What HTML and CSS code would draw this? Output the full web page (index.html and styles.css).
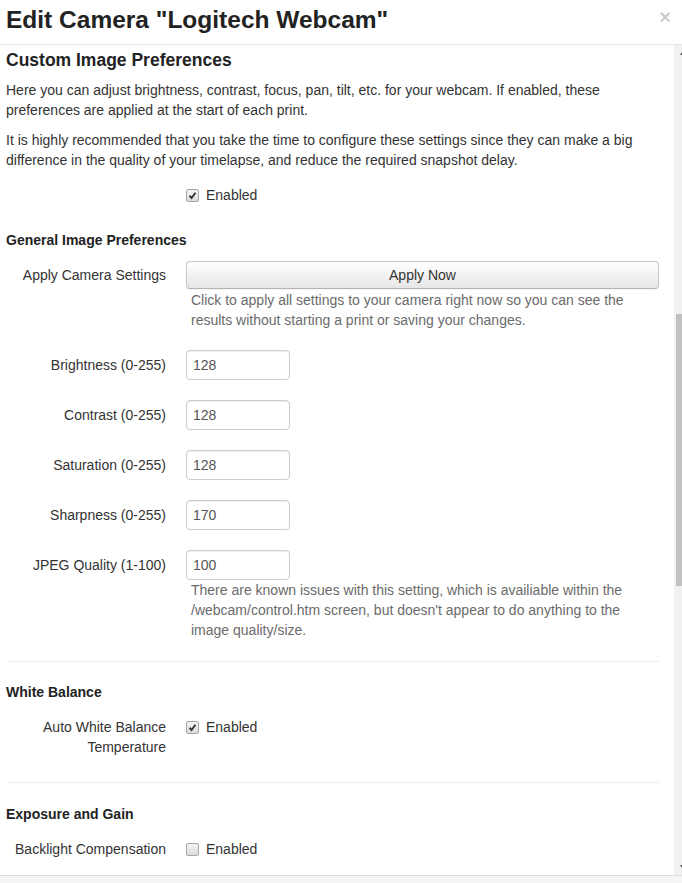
FILE: index.html
```html
<!DOCTYPE html>
<html lang="en">
<head>
    <meta charset="UTF-8">
    <title>Edit Camera</title>
    <link rel="stylesheet" href="styles.css">
</head>
<body>
    <div class="modal">
        <div class="modal-header">
            <h3>Edit Camera "Logitech Webcam"</h3>
            <span class="close">&times;</span>
        </div>
        <div class="modal-main">
            <div class="modal-body">
                <h4>Custom Image Preferences</h4>
                <p>Here you can adjust brightness, contrast, focus, pan, tilt, etc. for your webcam. If enabled, these preferences are applied at the start of each print.</p>
                <p>It is highly recommended that you take the time to configure these settings since they can make a big difference in the quality of your timelapse, and reduce the required snapshot delay.</p>

                <div class="row first">
                    <div class="label"></div>
                    <div class="controls">
                        <label class="check"><span class="box checked"><svg viewBox="0 0 13 13"><path d="M3 6.8 L5.4 9.4 L10 3.2" /></svg></span>Enabled</label>
                    </div>
                </div>

                <h5 class="group-title">General Image Preferences</h5>

                <div class="row apply">
                    <div class="label">Apply Camera Settings</div>
                    <div class="controls">
                        <button type="button" class="btn">Apply Now</button>
                        <span class="help">Click to apply all settings to your camera right now so you can see the results without starting a print or saving your changes.</span>
                    </div>
                </div>

                <div class="row field">
                    <div class="label">Brightness (0-255)</div>
                    <div class="controls"><input type="text" value="128"></div>
                </div>
                <div class="row field">
                    <div class="label">Contrast (0-255)</div>
                    <div class="controls"><input type="text" value="128"></div>
                </div>
                <div class="row field">
                    <div class="label">Saturation (0-255)</div>
                    <div class="controls"><input type="text" value="128"></div>
                </div>
                <div class="row field">
                    <div class="label">Sharpness (0-255)</div>
                    <div class="controls"><input type="text" value="170"></div>
                </div>
                <div class="row field last">
                    <div class="label">JPEG Quality (1-100)</div>
                    <div class="controls">
                        <input type="text" value="100">
                        <span class="help">There are known issues with this setting, which is availiable within the /webcam/control.htm screen, but doesn't appear to do anything to the image quality/size.</span>
                    </div>
                </div>

                <hr>

                <h5 class="group-title">White Balance</h5>
                <div class="row check-row">
                    <div class="label">Auto White Balance Temperature</div>
                    <div class="controls">
                        <label class="check"><span class="box checked"><svg viewBox="0 0 13 13"><path d="M3 6.8 L5.4 9.4 L10 3.2" /></svg></span>Enabled</label>
                    </div>
                </div>

                <hr class="second">

                <h5 class="group-title">Exposure and Gain</h5>
                <div class="row check-row">
                    <div class="label">Backlight Compensation</div>
                    <div class="controls">
                        <label class="check"><span class="box"></span>Enabled</label>
                    </div>
                </div>
            </div>
            <div class="scrollbar">
                <div class="arrow up"></div>
                <div class="thumb"></div>
                <div class="arrow down"></div>
            </div>
        </div>
        <div class="modal-footer"></div>
    </div>
</body>
</html>
```

FILE: styles.css
```css
:root {
    --text-color: #333333;
    --help-color: #6b6b6b;
    --border-color: #cccccc;
    --line-color: #e5e5e5;
}
html, body {
    margin: 0;
    padding: 0;
    background: #ffffff;
}
body {
    font-family: "Liberation Sans", Arial, sans-serif;
    font-size: 14px;
    line-height: 20px;
    color: var(--text-color);
    width: 682px;
    height: 883px;
    overflow: hidden;
}
.modal {
    display: flex;
    flex-direction: column;
    height: 883px;
}
.modal-header {
    height: 44px;
    border-bottom: 1px solid var(--line-color);
    display: flex;
    align-items: flex-start;
    justify-content: space-between;
    padding-left: 6px;
    flex-shrink: 0;
}
.modal-header h3 {
    margin: 0;
    padding-top: 5px;
    font-size: 24.5px;
    line-height: 30px;
    font-weight: bold;
    color: #222;
}
.close {
    font-size: 20px;
    font-weight: bold;
    line-height: 20px;
    color: #000;
    opacity: 0.2;
    margin: 7px 11px 0 0;
}
.modal-main {
    flex: 1;
    display: flex;
    min-height: 0;
}
.modal-body {
    flex: 1;
    padding: 0 15px 0 6px;
    overflow: hidden;
}
.modal-footer {
    height: 7px;
    border-top: 1px solid #dddddd;
    background: #f5f5f5;
    flex-shrink: 0;
}
h4 {
    margin: 5px 0 0;
    font-size: 17.5px;
    line-height: 20px;
    font-weight: bold;
    color: #222;
}
p {
    margin: 10px 0 0;
}
.group-title {
    margin: 25px 0 0;
    font-size: 14px;
    line-height: 20px;
    font-weight: bold;
    color: #222;
}
.row {
    display: flex;
    gap: 20px;
}
.row.first {
    margin-top: 15px;
}
.label {
    width: 160px;
    flex-shrink: 0;
    text-align: right;
}
.controls {
    flex: 1;
    display: flex;
    flex-direction: column;
    align-items: flex-start;
}
.apply {
    margin-top: 11px;
}
.apply .label {
    padding-top: 4px;
}
.btn {
    width: 100%;
    height: 28px;
    font-family: inherit;
    font-size: 14px;
    color: #333;
    border: 1px solid #c8c8c8;
    border-bottom-color: #b3b3b3;
    border-radius: 4px;
    background: linear-gradient(#ffffff, #e6e6e6);
    box-shadow: inset 0 1px 0 rgba(255,255,255,0.2), 0 1px 2px rgba(0,0,0,0.05);
    margin-bottom: 1px;
}
.help {
    display: block;
    padding-left: 5px;
    color: var(--help-color);
}
.field {
    margin-top: 20px;
}
.field .label {
    padding-top: 5px;
}
input[type="text"] {
    box-sizing: border-box;
    width: 104px;
    height: 30px;
    padding: 4px 6px;
    font-family: inherit;
    font-size: 14px;
    color: #555;
    border: 1px solid var(--border-color);
    border-radius: 4px;
    box-shadow: inset 0 1px 1px rgba(0,0,0,0.075);
}
hr {
    margin: 21px 0 0;
    border: 0;
    border-top: 1px solid #eeeeee;
}
hr + .group-title {
    margin-top: 20px;
}
hr.second {
    margin-top: 25px;
}
hr.second + .group-title {
    margin-top: 21px;
}
.check-row {
    margin-top: 15px;
}
.check {
    display: flex;
    align-items: center;
    gap: 7px;
}
.box {
    box-sizing: border-box;
    width: 13px;
    height: 13px;
    border: 1px solid #a6a6a6;
    border-radius: 2px;
    background: linear-gradient(#f4f4f4, #dcdcdc);
    display: inline-flex;
}
.box svg {
    width: 11px;
    height: 11px;
}
.box path {
    fill: none;
    stroke: #333;
    stroke-width: 2.2;
}
.scrollbar {
    width: 8px;
    background: #f1f1f1;
    display: flex;
    flex-direction: column;
    align-items: flex-end;
}
.thumb {
    width: 6px;
    height: 272px;
    margin-top: 259px;
    background: #c1c1c1;
}
.arrow {
    width: 0;
    height: 0;
    border-left: 2px solid transparent;
}
.arrow.up {
    margin-top: 7px;
    border-bottom: 3px solid #505050;
}
.arrow.down {
    margin-top: auto;
    margin-bottom: 7px;
    border-top: 3px solid #505050;
}
```
